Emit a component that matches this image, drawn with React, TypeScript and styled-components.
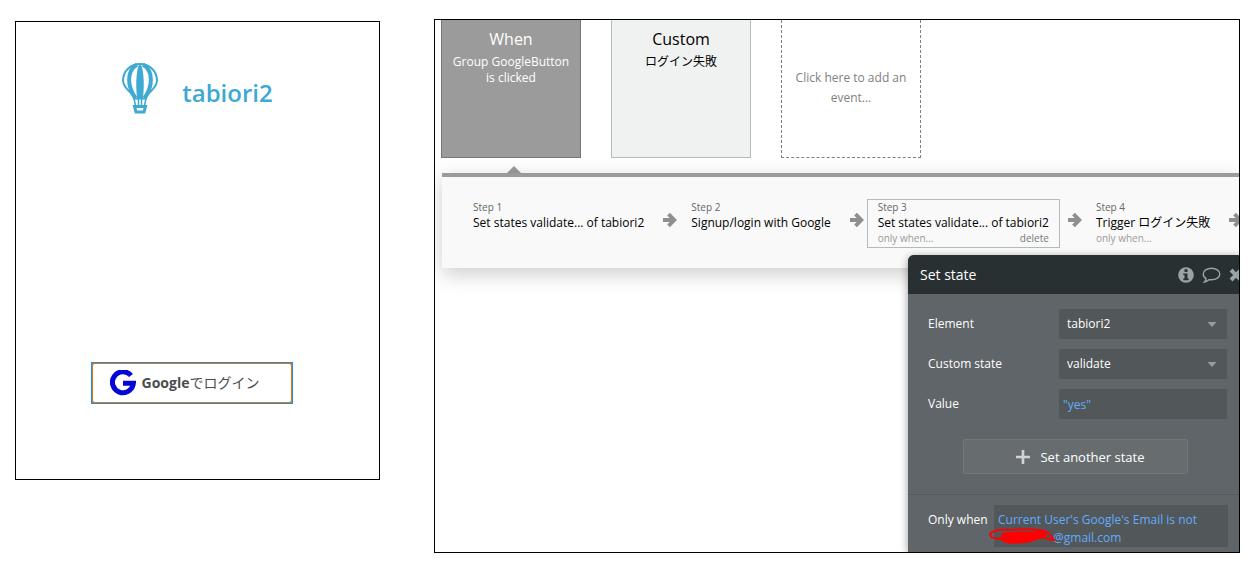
import React from "react";
import styled, { createGlobalStyle } from "styled-components";

const GlobalStyle = createGlobalStyle`
  *, *::before, *::after { box-sizing: border-box; }
  body {
    margin: 0;
    background: #fff;
    color: #000;
    font-family: "Open Sans", "Noto Sans CJK JP", sans-serif;
    font-size: 12px;
    line-height: 16px;
  }
  button, select, input { font: inherit; }
`;

const Page = styled.main`
  display: flex;
  align-items: flex-start;
  gap: 54px;
  padding: 19px 19px 23px 15px;
`;

const Preview = styled.section`
  flex: 0 1 365px;
  margin-top: 2px;
  padding: 41px 16px 75px;
  border: 1px solid #000;
  display: flex;
  flex-direction: column;
  align-items: center;
  gap: 248px;
`;

const Brand = styled.div`
  display: flex;
  align-items: center;
  gap: 24px;
`;

const BrandName = styled.h1`
  margin: 8px 0 0;
  color: #3ea9d2;
  font-size: 24px;
  line-height: 32px;
  font-weight: 600;
`;

const GoogleButton = styled.button`
  display: flex;
  width: 202px;
  margin-right: 12px;
  padding: 0;
  border: 1px solid #1e8ae6;
  background: #888;
  color: #4d4d4d;
  font-size: 14px;
  line-height: 20px;
  font-weight: 700;
`;

const GoogleFace = styled.span`
  flex: 1;
  display: flex;
  align-items: center;
  gap: 6px;
  height: 40px;
  padding-left: 17px;
  border: 1px solid #e07b00;
  border-radius: 3px;
  background: #fff;
`;

const Kana = styled.span`
  font-weight: 400;
`;

const Editor = styled.section`
  flex: 1 1 0;
  min-width: 0;
  border: 1px solid #000;
  overflow: hidden;
`;

const Events = styled.div`
  display: flex;
  gap: 30px;
  padding-left: 6px;
`;

const EventCard = styled.button<{ $kind: "active" | "idle" | "empty" }>`
  flex: none;
  width: 140px;
  height: 138px;
  padding: ${(p) => (p.$kind === "empty" ? "0 10px 2px" : "8px 10px")};
  display: flex;
  flex-direction: column;
  align-items: center;
  justify-content: ${(p) => (p.$kind === "empty" ? "center" : "flex-start")};
  text-align: center;
  border: 1px ${(p) => (p.$kind === "empty" ? "dashed #808080" : p.$kind === "active" ? "solid #777" : "solid #b0bcbe")};
  border-top: 0;
  background: ${(p) => (p.$kind === "active" ? "#9b9b9b" : p.$kind === "idle" ? "#f0f2f1" : "#fff")};
  color: ${(p) => (p.$kind === "active" ? "#fff" : p.$kind === "idle" ? "#000" : "#808080")};
  line-height: ${(p) => (p.$kind === "empty" ? 20 : 16)}px;
`;

const EventTitle = styled.span`
  font-size: 16px;
  line-height: 22px;
  margin-bottom: 4px;
`;

const Pointer = styled.div`
  width: 0;
  margin: 8px 0 0 72px;
  border: 7px solid transparent;
  border-top: 0;
  border-bottom-color: #9b9b9b;
`;

const Steps = styled.ol`
  list-style: none;
  display: flex;
  height: 95px;
  margin: 0 0 0 7px;
  padding: 22px 0 0 20px;
  border-top: 4px solid #9b9b9b;
  background: #f9f9f9;
  box-shadow: 0 6px 20px rgba(0, 0, 0, 0.2);
`;

const StepItem = styled.li`
  flex: none;
  display: flex;
  align-items: flex-start;
`;

const StepBox = styled.div<{ $selected?: boolean }>`
  height: 49px;
  padding: 0 10px;
  border: 1px solid ${(p) => (p.$selected ? "#b0bcbe" : "transparent")};
`;

const StepTitle = styled.div`
  white-space: nowrap;
`;

const StepNote = styled.div<{ $light?: boolean }>`
  display: flex;
  justify-content: space-between;
  font-size: 10px;
  line-height: 15px;
  color: ${(p) => (p.$light ? "#999" : "#666")};
`;

const DeleteButton = styled.button`
  padding: 0;
  border: 0;
  background: none;
  color: #777;
`;

const ArrowSlot = styled.span`
  display: block;
  margin: 13px 3px 0 8px;
  height: 16px;
`;

const Popup = styled.form`
  position: relative;
  width: 335px;
  margin: -13px 0 0 473px;
  border-radius: 6px 6px 0 0;
  background: #5f6568;
  color: #fff;
  box-shadow: 0 2px 8px rgba(0, 0, 0, 0.4);
`;

const PopupHeader = styled.header`
  display: flex;
  align-items: center;
  height: 39px;
  padding-left: 12px;
  border-radius: 6px 6px 0 0;
  background: #283032;
`;

const PopupTitle = styled.h2`
  flex: 1;
  margin: 0;
  font-size: 14px;
  line-height: 20px;
  font-weight: 400;
`;

const IconButton = styled.button`
  display: flex;
  margin-right: 8px;
  padding: 0;
  border: 0;
  background: none;
  color: #9aa3a7;
`;

const CloseButton = styled(IconButton)`
  margin: 0;
`;

const Fields = styled.div`
  display: grid;
  gap: 10px;
  padding: 15px 16px 20px 20px;
`;

const Field = styled.div`
  display: grid;
  grid-template-columns: 131px 1fr;
  align-items: center;
`;

const SelectWrap = styled.span`
  display: grid;
  grid-template-columns: 1fr 20px;
  align-items: center;
  background: #525759;
`;

const Select = styled.select`
  grid-area: 1 / 1 / 2 / 3;
  width: 100%;
  height: 30px;
  padding: 0 8px;
  border: 0;
  appearance: none;
  background: transparent;
  color: #fff;
`;

const CaretSlot = styled.span`
  grid-area: 1 / 2;
  display: flex;
  pointer-events: none;
`;

const ValueInput = styled.input`
  width: 100%;
  height: 30px;
  padding: 0 4px;
  border: 0;
  background: #525759;
  color: #61acff;
`;

const AddButton = styled.button`
  justify-self: center;
  display: flex;
  align-items: center;
  justify-content: center;
  gap: 10px;
  width: 225px;
  height: 35px;
  margin: 10px 4px 0 0;
  padding: 0 0 0 10px;
  border: 1px solid #72787a;
  border-radius: 2px;
  background: #676d6f;
  color: #fff;
  font-size: 13px;
`;

const Condition = styled.div`
  display: grid;
  grid-template-columns: 66px 1fr;
  padding: 10px 15px 5px 20px;
  border-top: 1px solid #54595c;
`;

const ConditionLabel = styled.span`
  padding-top: 6px;
  line-height: 18px;
`;

const Expression = styled.div`
  height: 42px;
  padding: 6px 4px 0;
  background: #525759;
  color: #61acff;
  line-height: 18px;
`;

const Redacted = styled.span`
  position: relative;
  display: inline-block;
  width: 55px;
  height: 12px;
`;

const Scribble = styled.svg`
  position: absolute;
  left: -9px;
  top: -2px;
`;

const Balloon = () => (
  <svg width="36" height="51" viewBox="0 0 36 51" fill="none" stroke="#3ea9d2" aria-hidden="true">
    <path d="M12 35.500C11 29 1 26 1 17.500C1 8 8.500 1 18 1S35 8 35 17.500C35 26 25 29 24 35.500Z" strokeWidth="2" />
    <path d="M15 1.500C4.500 8 5 23 13.500 35" strokeWidth="4" />
    <path d="M21 1.500C31.500 8 31 23 22.500 35" strokeWidth="4" />
    <path d="M18 1C14 7 14.500 26 15.500 35H20.500C21.500 26 22 7 18 1Z" fill="#3ea9d2" strokeWidth="1" />
    <path d="M12 35L13.500 43M24 35L22.500 43M16.500 35V43M19.500 35V43" strokeWidth="1.500" />
    <path d="M12.500 43.500H23.500L22 49H14Z" strokeWidth="3" />
  </svg>
);

const GoogleG = () => (
  <svg width="26" height="26" viewBox="0 0 26 26" fill="none" stroke="#0505d8" strokeWidth="5" aria-hidden="true">
    <path d="M21 5.500A10.500 10.500 0 1 0 23.400 13.300H13" />
  </svg>
);

const Arrow = () => (
  <ArrowSlot>
    <svg width="14" height="16" viewBox="0 0 14 16" fill="none" stroke="#8f8f8f" strokeWidth="3.800" aria-hidden="true">
      <path d="M0 8H11M5.500 2.200L11.300 8L5.500 13.800" />
    </svg>
  </ArrowSlot>
);

const Caret = () => (
  <CaretSlot>
    <svg width="10" height="5" viewBox="0 0 10 5" fill="#999da0" aria-hidden="true">
      <path d="M0.500 0H9.500L5 5Z" />
    </svg>
  </CaretSlot>
);

const steps = [
  { title: "Set states validate... of tabiori2" },
  { title: "Signup/login with Google" },
  { title: "Set states validate... of tabiori2", condition: true, selected: true },
  { title: "Trigger ログイン失敗", condition: true },
];

export default function App() {
  return (
    <>
      <GlobalStyle />
      <Page>
        <Preview>
          <Brand>
            <Balloon />
            <BrandName>tabiori2</BrandName>
          </Brand>
          <GoogleButton type="button">
            <GoogleFace>
              <GoogleG />
              <span>
                Google<Kana>でログイン</Kana>
              </span>
            </GoogleFace>
          </GoogleButton>
        </Preview>

        <Editor>
          <Events>
            <EventCard type="button" $kind="active">
              <EventTitle>When</EventTitle>
              Group GoogleButton is clicked
            </EventCard>
            <EventCard type="button" $kind="idle">
              <EventTitle>Custom</EventTitle>
              ログイン失敗
            </EventCard>
            <EventCard type="button" $kind="empty">
              Click here to add an event...
            </EventCard>
          </Events>
          <Pointer />
          <Steps>
            {steps.map((step, i) => (
              <StepItem key={i}>
                <StepBox $selected={step.selected}>
                  <StepNote>Step {i + 1}</StepNote>
                  <StepTitle>{step.title}</StepTitle>
                  {step.condition && (
                    <StepNote $light>
                      only when...
                      {step.selected && <DeleteButton type="button">delete</DeleteButton>}
                    </StepNote>
                  )}
                </StepBox>
                <Arrow />
              </StepItem>
            ))}
          </Steps>

          <Popup onSubmit={(e) => e.preventDefault()}>
            <PopupHeader>
              <PopupTitle>Set state</PopupTitle>
              <IconButton type="button" aria-label="Info">
                <svg width="16" height="16" viewBox="0 0 16 16">
                  <circle cx="8" cy="8" r="7.800" fill="#9aa3a7" />
                  <path d="M6.500 2.300H9.500V5H6.500ZM5.300 6.400H9.500V11.500H10.700V13.200H5.300V11.500H6.500V8.100H5.300Z" fill="#283032" />
                </svg>
              </IconButton>
              <IconButton type="button" aria-label="Comment">
                <svg width="19" height="16" viewBox="0 0 19 16" fill="none" stroke="#9aa3a7" strokeWidth="1.400">
                  <path d="M9.500 1.200C14 1.200 17.800 3.700 17.800 7S14 12.800 9.500 12.800C8.700 12.800 8 12.700 7.300 12.600C6 13.900 4.500 14.700 2.500 15C3.400 14.100 4 13 4.100 11.600C2.300 10.500 1.200 8.900 1.200 7C1.200 3.700 5 1.200 9.500 1.200Z" />
                </svg>
              </IconButton>
              <CloseButton type="button" aria-label="Close">
                <svg width="14" height="14" viewBox="0 0 14 14" stroke="#9aa3a7" strokeWidth="4">
                  <path d="M2 2L12 12M12 2L2 12" />
                </svg>
              </CloseButton>
            </PopupHeader>
            <Fields>
              <Field>
                <label htmlFor="element">Element</label>
                <SelectWrap>
                  <Select id="element" defaultValue="tabiori2">
                    <option>tabiori2</option>
                  </Select>
                  <Caret />
                </SelectWrap>
              </Field>
              <Field>
                <label htmlFor="state">Custom state</label>
                <SelectWrap>
                  <Select id="state" defaultValue="validate">
                    <option>validate</option>
                  </Select>
                  <Caret />
                </SelectWrap>
              </Field>
              <Field>
                <label htmlFor="value">Value</label>
                <ValueInput id="value" defaultValue={'"yes"'} />
              </Field>
              <AddButton type="button">
                <svg width="14" height="14" viewBox="0 0 14 14" stroke="#d0d2d3" strokeWidth="2.600" aria-hidden="true">
                  <path d="M7 0V14M0 7H14" />
                </svg>
                Set another state
              </AddButton>
            </Fields>
            <Condition>
              <ConditionLabel>Only when</ConditionLabel>
              <Expression>
                Current User's Google's Email is not{" "}
                <Redacted>
                  <Scribble width="68" height="18" viewBox="0 0 68 18" aria-hidden="true">
                    <path d="M13 5C22 3 42 4 52 3C58 4 60 7 56 10C46 11 44 15 34 15C26 16 16 17 11 11Z" fill="#f00" />
                    <path d="M20 2C8 1 1 4 1 7C2 10 8 11 14 11M20 2C32 1 50 1 58 4C61 6 63 9 65 12C60 12 55 9 50 8" fill="none" stroke="#f00" strokeWidth="2" />
                  </Scribble>
                </Redacted>
                @gmail.com
              </Expression>
            </Condition>
          </Popup>
        </Editor>
      </Page>
    </>
  );
}
